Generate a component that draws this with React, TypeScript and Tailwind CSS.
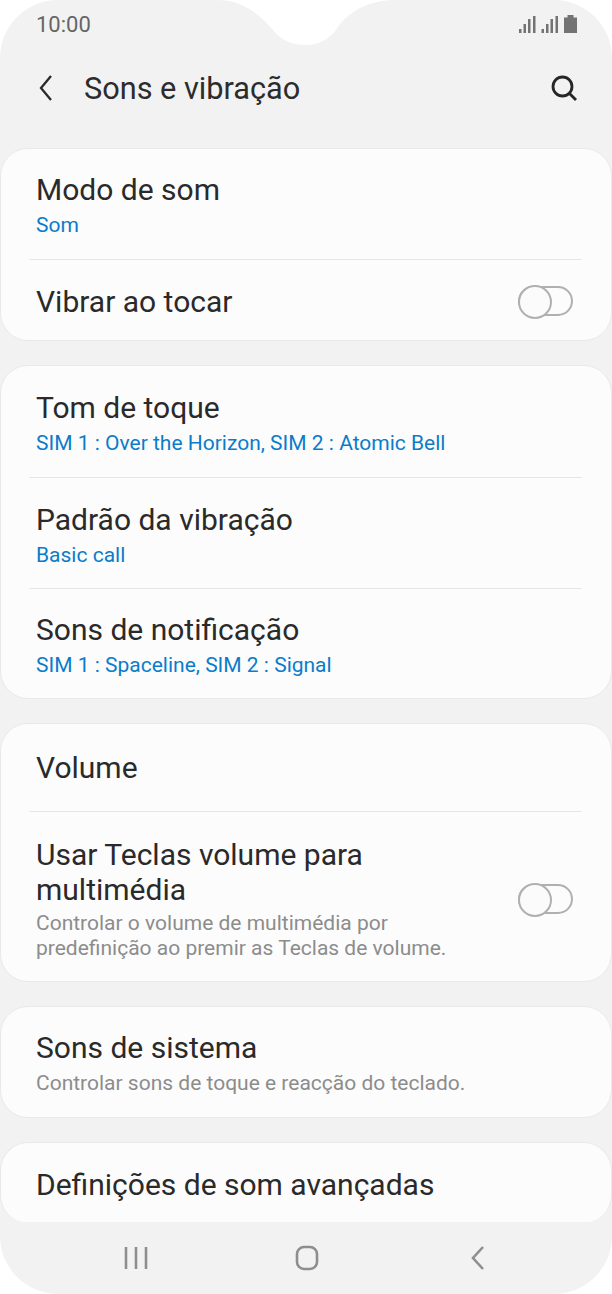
function Toggle() {
  return (
    <div className="relative h-[30px] w-[55px] shrink-0 rounded-full border-2 border-[#b0b0b0]">
      <div className="absolute -left-[2px] -top-[3px] h-[34px] w-[34px] rounded-full border-2 border-[#b0b0b0] bg-[#fbfbfb]" />
    </div>
  );
}

function Row({ title, sub, divider, gray, className = "" }: { title: string; sub?: string; divider?: boolean; gray?: boolean; className?: string }) {
  return (
    <div className={"relative flex flex-col justify-center px-[35px] " + className}>
      <div className="text-[30px] leading-[36px] text-[#2a2a2a]">{title}</div>
      {sub && <div className={"mt-1 text-[21px] leading-[26px] " + (gray ? "text-[#8c8c8c]" : "text-[#0a7ccb]")}>{sub}</div>}
      {divider && <div className="absolute bottom-0 left-[28px] right-[29px] h-px bg-[#e6e6e6]" />}
    </div>
  );
}

function Card({ children }: { children: React.ReactNode }) {
  return <div className="overflow-hidden rounded-[28px] border border-[#e9e9e9] bg-[#fcfcfc]">{children}</div>;
}

export default function App() {
  return (
    <div className="relative h-[1294px] w-[612px] overflow-hidden bg-white font-['Roboto',sans-serif]">
      <div className="flex h-full flex-col overflow-hidden rounded-[58px] bg-[#f2f2f2]">
        <div className="flex h-[46px] shrink-0 items-center justify-between pl-9 pr-[33px] pt-[2px]">
          <span className="text-[22px] text-[#666666]">10:00</span>
          <svg width="60" height="22" viewBox="0 0 60 22" fill="#737373" className="-mt-[1px]">
            <rect x="0" y="16" width="2.500" height="4" />
            <rect x="4.500" y="11" width="2.500" height="9" />
            <rect x="9" y="6" width="2.500" height="14" />
            <rect x="14" y="3" width="2.500" height="17" />
            <rect x="22.500" y="16" width="2.500" height="4" />
            <rect x="27" y="11" width="2.500" height="9" />
            <rect x="31.500" y="6" width="2.500" height="14" />
            <rect x="36.500" y="3" width="2.500" height="17" />
            <path d="M45 4.500h3.500V2h6v2.500H58V20H45z" />
          </svg>
        </div>
        <div className="flex h-[76px] shrink-0 items-center justify-between pl-[36px] pr-[34px] pt-[8px]">
          <div className="flex items-center">
            <svg width="20" height="28" viewBox="0 0 20 28" fill="none" stroke="#2a2a2a" strokeWidth="2.300">
              <path d="M15 2 5 14l10 12" />
            </svg>
            <span className="ml-[28px] pt-[2px] text-[30.700px] leading-[40px] text-[#2c2c2c]">Sons e vibração</span>
          </div>
          <svg width="28" height="28" viewBox="0 0 28 28" fill="none" stroke="#262626" strokeWidth="2.800">
            <circle cx="12.500" cy="12.500" r="9.500" />
            <path d="m19.500 19.500 6.500 6.500" />
          </svg>
        </div>
        <div className="flex flex-1 flex-col gap-[24px] overflow-hidden pt-[26px]">
          <Card>
            <Row title="Modo de som" sub="Som" divider className="h-[111px]" />
            <div className="flex h-[80px] items-center justify-between pl-[35px] pr-[38px] pt-[2px]">
              <span className="text-[30px] text-[#2a2a2a]">Vibrar ao tocar</span>
              <Toggle />
            </div>
          </Card>
          <Card>
            <Row title="Tom de toque" sub="SIM 1 : Over the Horizon, SIM 2 : Atomic Bell" divider className="h-[112px] pt-[2px]" />
            <Row title="Padrão da vibração" sub="Basic call" divider className="h-[111px] pt-[2px]" />
            <Row title="Sons de notificação" sub="SIM 1 : Spaceline, SIM 2 : Signal" className="h-[109px] pt-[2px]" />
          </Card>
          <Card>
            <Row title="Volume" divider className="h-[88px]" />
            <div className="flex h-[169px] items-center justify-between pl-[35px] pr-[38px] pt-[4px]">
              <div>
                <div className="text-[30px] leading-[35px] text-[#2a2a2a]">Usar Teclas volume para<br />multimédia</div>
                <div className="mt-1 text-[21px] leading-[25px] text-[#8c8c8c]">Controlar o volume de multimédia por<br />predefinição ao premir as Teclas de volume.</div>
              </div>
              <Toggle />
            </div>
          </Card>
          <Card>
            <Row title="Sons de sistema" sub="Controlar sons de toque e reacção do teclado." gray className="h-[110px] pt-[2px]" />
          </Card>
          <div className="-mb-[1px] overflow-hidden rounded-[28px] border border-b-0 border-[#e9e9e9] bg-[#fcfcfc]">
            <Row title="Definições de som avançadas" className="h-[80px] pt-[4px]" />
          </div>
        </div>
        <div className="flex h-[72px] shrink-0 items-center">
          <div className="flex w-full items-center pl-[124px]">
            <svg width="24" height="24" viewBox="0 0 24 24" fill="none" stroke="#8e8e8e" strokeWidth="2.600"><path d="M2 1v22M12 1v22M22 1v22" /></svg>
            <svg width="24" height="26" viewBox="0 0 24 26" fill="none" stroke="#8e8e8e" strokeWidth="2.600" className="ml-[147px]"><rect x="2" y="2" width="20" height="22" rx="7" /></svg>
            <svg width="16" height="24" viewBox="0 0 16 24" fill="none" stroke="#8e8e8e" strokeWidth="2.600" className="ml-[151px]"><path d="M13 1 3 12l10 11" /></svg>
          </div>
        </div>
      </div>
      <svg width="612" height="48" viewBox="0 0 612 48" fill="#fff" className="absolute left-0 top-0">
        <path d="M217 0C242 0 258 13 273 30c8 10 19 15 32 15 14 0 24-6 31-15C346 14 366 0 395 0Z" />
      </svg>
    </div>
  );
}
